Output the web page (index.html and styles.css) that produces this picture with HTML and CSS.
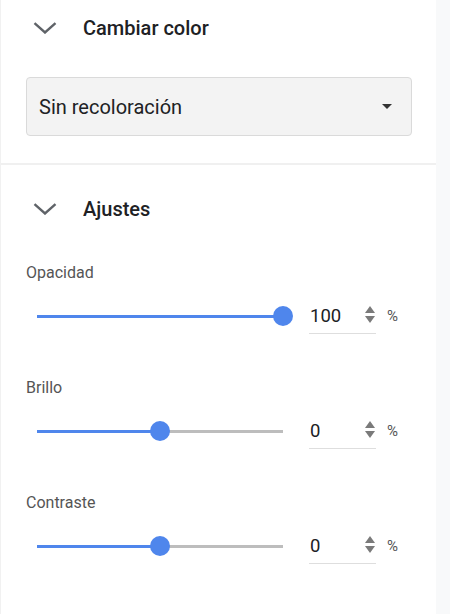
FILE: index.html
```html
<!DOCTYPE html>
<html lang="es">
<head>
<meta charset="utf-8">
<link rel="stylesheet" href="styles.css">
</head>
<body>
<div class="layout">
  <aside class="panel">
    <section class="section section-color">
      <div class="section-header">
        <svg class="chevron" width="24" height="12" viewBox="0 0 24 12"><path d="M1.5 1.2 L12 10.5 L22.5 1.2" fill="none" stroke="#5f6368" stroke-width="2.4"/></svg>
        <h2 class="section-title">Cambiar color</h2>
      </div>
      <div class="select">
        <span class="select-text">Sin recoloración</span>
        <span class="select-caret"></span>
      </div>
    </section>
    <section class="section section-adjust">
      <div class="section-header">
        <svg class="chevron" width="24" height="12" viewBox="0 0 24 12"><path d="M1.5 1.2 L12 10.5 L22.5 1.2" fill="none" stroke="#5f6368" stroke-width="2.4"/></svg>
        <h2 class="section-title">Ajustes</h2>
      </div>
      <div class="controls">
        <div class="control">
          <div class="control-label">Opacidad</div>
          <div class="control-row">
            <div class="slider">
              <div class="track">
                <div class="fill" style="width:100%"></div>
                <div class="thumb" style="left:100%"></div>
              </div>
            </div>
            <div class="number">
              <span class="number-value">100</span>
              <span class="spinner"><span class="spin-up"></span><span class="spin-down"></span></span>
            </div>
            <span class="unit">%</span>
          </div>
        </div>
        <div class="control">
          <div class="control-label">Brillo</div>
          <div class="control-row">
            <div class="slider">
              <div class="track">
                <div class="fill" style="width:50%"></div>
                <div class="thumb" style="left:50%"></div>
              </div>
            </div>
            <div class="number">
              <span class="number-value">0</span>
              <span class="spinner"><span class="spin-up"></span><span class="spin-down"></span></span>
            </div>
            <span class="unit">%</span>
          </div>
        </div>
        <div class="control">
          <div class="control-label">Contraste</div>
          <div class="control-row">
            <div class="slider">
              <div class="track">
                <div class="fill" style="width:50%"></div>
                <div class="thumb" style="left:50%"></div>
              </div>
            </div>
            <div class="number">
              <span class="number-value">0</span>
              <span class="spinner"><span class="spin-up"></span><span class="spin-down"></span></span>
            </div>
            <span class="unit">%</span>
          </div>
        </div>
      </div>
    </section>
  </aside>
  <div class="side-strip"></div>
</div>
</body>
</html>
```
FILE: styles.css
```css
* { box-sizing: border-box; }
html, body { margin: 0; padding: 0; }
body {
  font-family: Roboto, "Noto Sans", "Liberation Sans", sans-serif;
  background: #f8f9fa;
  color: #202124;
}
.layout {
  display: flex;
  width: 450px;
  height: 614px;
}
.panel {
  width: 436px;
  flex: none;
  background: #ffffff;
  border-left: 1px solid #f1f1f1;
  display: flex;
  flex-direction: column;
}
.side-strip {
  flex: 1;
  background: #f8f9fa;
}
.section-color {
  padding-bottom: 27px;
  border-bottom: 2px solid #f0f0f0;
}
.section-header {
  height: 56px;
  display: flex;
  align-items: center;
  padding-left: 32px;
}
.section-adjust .section-header {
  margin-top: 16px;
}
.chevron { flex: none; display: block; }
.section-title {
  margin: 0 0 0 26px;
  font-size: 20px;
  font-weight: 500;
  color: #202124;
}
.select {
  margin: 21px 0 0 25px;
  width: 386px;
  height: 59px;
  border: 1px solid #dadada;
  border-radius: 4px;
  background: #f3f3f3;
  display: flex;
  align-items: center;
  justify-content: space-between;
  padding: 0 19px 0 12px;
}
.select-text {
  font-size: 20px;
  color: #202124;
}
.select-caret {
  width: 0;
  height: 0;
  border-left: 5.5px solid transparent;
  border-right: 5.5px solid transparent;
  border-top: 5px solid #333;
}
.controls {
  padding: 26px 0 0 25px;
  display: flex;
  flex-direction: column;
  gap: 44px;
}
.control-label {
  font-size: 16px;
  line-height: 20px;
  color: #555555;
}
.control-row {
  margin-top: 15px;
  height: 36px;
  display: flex;
  align-items: center;
}
.slider {
  width: 266px;
  padding: 0 10px;
  margin-left: 1px;
  flex: none;
}
.track {
  position: relative;
  height: 3px;
  background: #bdbdbd;
}
.fill {
  height: 100%;
  background: #4f86ec;
}
.thumb {
  position: absolute;
  top: 50%;
  width: 20px;
  height: 20px;
  margin: -10px 0 0 -10px;
  border-radius: 50%;
  background: #4f86ec;
}
.number {
  margin-left: 16px;
  width: 67px;
  height: 36px;
  border-bottom: 1px solid #dedede;
  display: flex;
  align-items: center;
  justify-content: space-between;
  padding: 0 1px 0 1px;
}
.number-value {
  font-size: 18.5px;
  line-height: 36px;
  color: #202124;
}
.spinner {
  display: flex;
  flex-direction: column;
  gap: 3px;
  margin-top: -2px;
}
.spin-up, .spin-down {
  width: 0;
  height: 0;
  border-left: 5px solid transparent;
  border-right: 5px solid transparent;
}
.spin-up { border-bottom: 7px solid #7a7a7a; }
.spin-down { border-top: 7px solid #7a7a7a; }
.unit {
  margin-left: 11px;
  font-size: 15px;
  color: #555555;
  margin-top: -1px;
}
```
